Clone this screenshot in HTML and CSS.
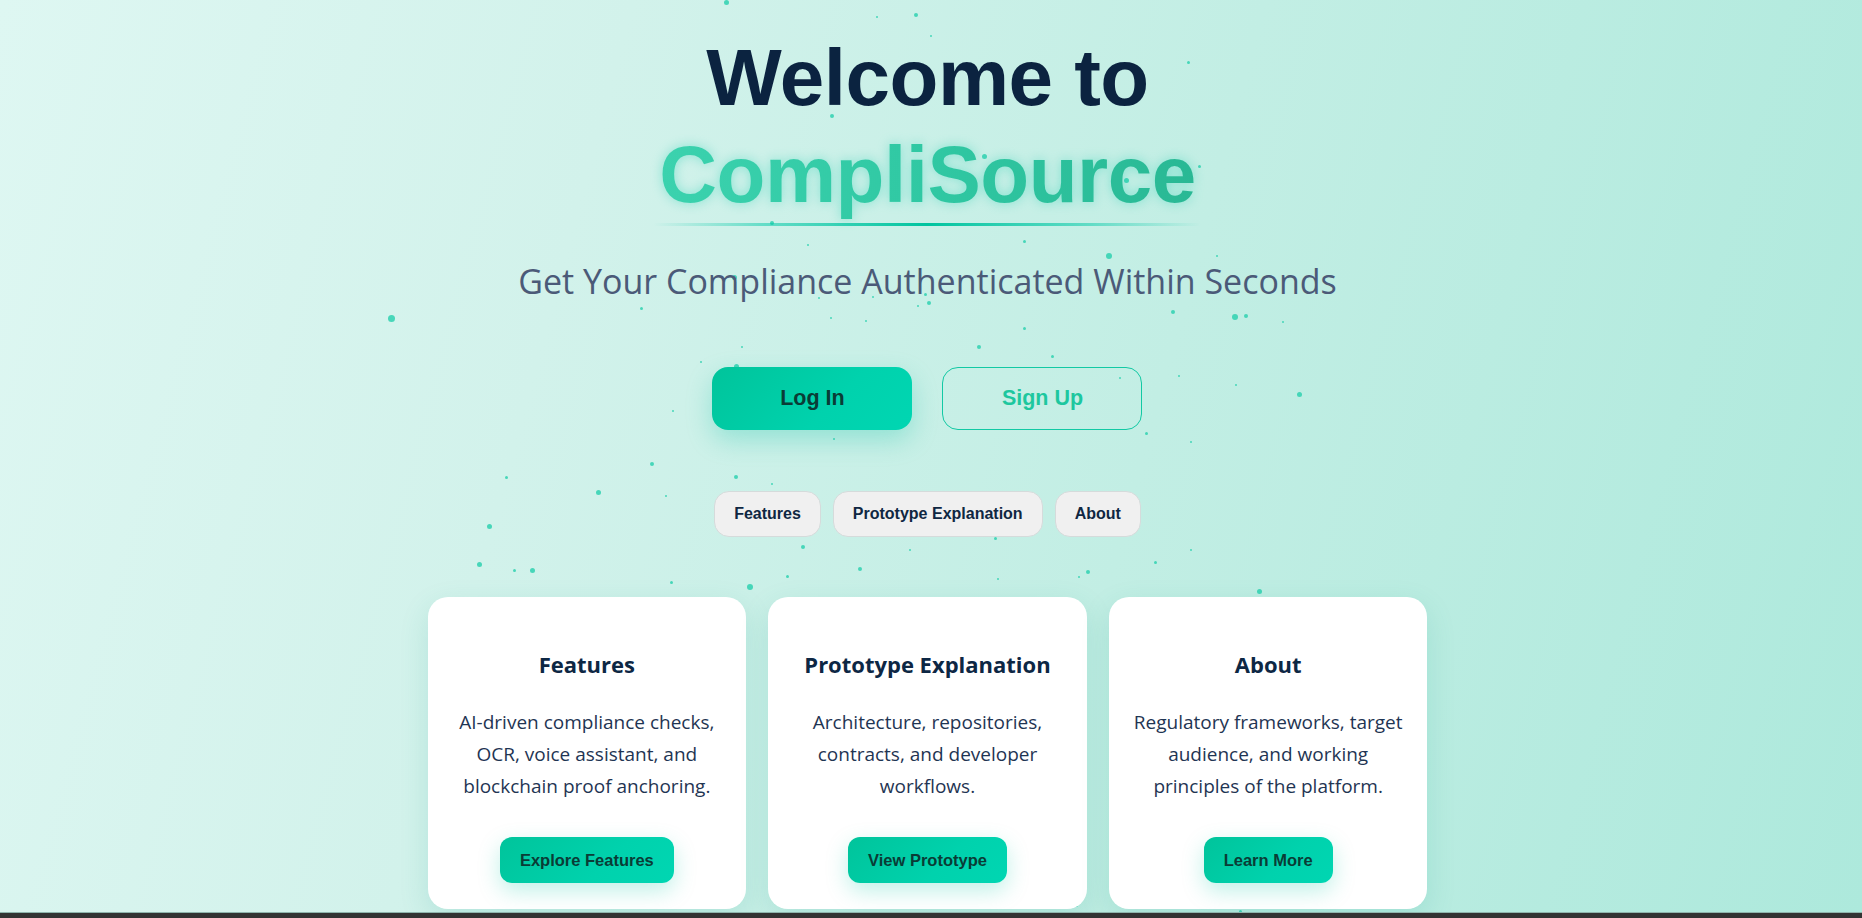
FILE: index.html
```html
<!DOCTYPE html>
<html lang="en">
<head>
<meta charset="utf-8">
<title>CompliSource</title>
<link rel="stylesheet" href="styles.css">
</head>
<body>
<div class="particles">
  <span class="dot" style="left:724px;top:0px;width:5px;height:5px"></span>
  <span class="dot" style="left:876px;top:16px;width:2px;height:2px"></span>
  <span class="dot" style="left:914px;top:13px;width:4px;height:4px"></span>
  <span class="dot" style="left:930px;top:35px;width:2px;height:2px"></span>
  <span class="dot" style="left:1187px;top:61px;width:3px;height:3px"></span>
  <span class="dot" style="left:830px;top:114px;width:4px;height:4px"></span>
  <span class="dot" style="left:982px;top:154px;width:5px;height:5px"></span>
  <span class="dot" style="left:1198px;top:165px;width:3px;height:3px"></span>
  <span class="dot" style="left:1124px;top:178px;width:5px;height:5px"></span>
  <span class="dot" style="left:770px;top:221px;width:4px;height:4px"></span>
  <span class="dot" style="left:807px;top:244px;width:2px;height:2px"></span>
  <span class="dot" style="left:1023px;top:240px;width:3px;height:3px"></span>
  <span class="dot" style="left:1106px;top:253px;width:6px;height:6px"></span>
  <span class="dot" style="left:1216px;top:255px;width:2px;height:2px"></span>
  <span class="dot" style="left:732px;top:275px;width:5px;height:5px"></span>
  <span class="dot" style="left:640px;top:307px;width:3px;height:3px"></span>
  <span class="dot" style="left:924px;top:293px;width:3px;height:3px"></span>
  <span class="dot" style="left:927px;top:301px;width:4px;height:4px"></span>
  <span class="dot" style="left:818px;top:297px;width:2px;height:2px"></span>
  <span class="dot" style="left:872px;top:296px;width:2px;height:2px"></span>
  <span class="dot" style="left:917px;top:305px;width:2px;height:2px"></span>
  <span class="dot" style="left:388px;top:315px;width:7px;height:7px"></span>
  <span class="dot" style="left:1023px;top:327px;width:3px;height:3px"></span>
  <span class="dot" style="left:1171px;top:310px;width:4px;height:4px"></span>
  <span class="dot" style="left:1232px;top:314px;width:6px;height:6px"></span>
  <span class="dot" style="left:1244px;top:314px;width:4px;height:4px"></span>
  <span class="dot" style="left:1282px;top:321px;width:2px;height:2px"></span>
  <span class="dot" style="left:830px;top:317px;width:2px;height:2px"></span>
  <span class="dot" style="left:865px;top:320px;width:2px;height:2px"></span>
  <span class="dot" style="left:977px;top:345px;width:4px;height:4px"></span>
  <span class="dot" style="left:1051px;top:355px;width:3px;height:3px"></span>
  <span class="dot" style="left:741px;top:346px;width:2px;height:2px"></span>
  <span class="dot" style="left:700px;top:361px;width:2px;height:2px"></span>
  <span class="dot" style="left:734px;top:364px;width:5px;height:5px"></span>
  <span class="dot" style="left:1119px;top:377px;width:2px;height:2px"></span>
  <span class="dot" style="left:1178px;top:375px;width:2px;height:2px"></span>
  <span class="dot" style="left:1235px;top:384px;width:2px;height:2px"></span>
  <span class="dot" style="left:1297px;top:392px;width:5px;height:5px"></span>
  <span class="dot" style="left:672px;top:410px;width:2px;height:2px"></span>
  <span class="dot" style="left:738px;top:425px;width:2px;height:2px"></span>
  <span class="dot" style="left:833px;top:438px;width:2px;height:2px"></span>
  <span class="dot" style="left:1145px;top:432px;width:3px;height:3px"></span>
  <span class="dot" style="left:1190px;top:441px;width:2px;height:2px"></span>
  <span class="dot" style="left:650px;top:462px;width:4px;height:4px"></span>
  <span class="dot" style="left:505px;top:476px;width:3px;height:3px"></span>
  <span class="dot" style="left:596px;top:490px;width:5px;height:5px"></span>
  <span class="dot" style="left:665px;top:495px;width:2px;height:2px"></span>
  <span class="dot" style="left:734px;top:475px;width:4px;height:4px"></span>
  <span class="dot" style="left:771px;top:483px;width:2px;height:2px"></span>
  <span class="dot" style="left:487px;top:524px;width:5px;height:5px"></span>
  <span class="dot" style="left:801px;top:545px;width:4px;height:4px"></span>
  <span class="dot" style="left:909px;top:549px;width:2px;height:2px"></span>
  <span class="dot" style="left:994px;top:537px;width:3px;height:3px"></span>
  <span class="dot" style="left:1154px;top:561px;width:3px;height:3px"></span>
  <span class="dot" style="left:1190px;top:549px;width:2px;height:2px"></span>
  <span class="dot" style="left:477px;top:562px;width:5px;height:5px"></span>
  <span class="dot" style="left:513px;top:569px;width:3px;height:3px"></span>
  <span class="dot" style="left:530px;top:568px;width:5px;height:5px"></span>
  <span class="dot" style="left:670px;top:581px;width:3px;height:3px"></span>
  <span class="dot" style="left:747px;top:584px;width:6px;height:6px"></span>
  <span class="dot" style="left:786px;top:575px;width:3px;height:3px"></span>
  <span class="dot" style="left:858px;top:567px;width:4px;height:4px"></span>
  <span class="dot" style="left:997px;top:578px;width:2px;height:2px"></span>
  <span class="dot" style="left:1078px;top:576px;width:2px;height:2px"></span>
  <span class="dot" style="left:1086px;top:570px;width:4px;height:4px"></span>
  <span class="dot" style="left:1257px;top:589px;width:5px;height:5px"></span>
  <span class="dot" style="left:1075px;top:904px;width:3px;height:3px"></span>
  <span class="dot" style="left:1239px;top:910px;width:3px;height:3px"></span>
</div>

<main class="page">
  <header class="hero">
    <h1 class="title">
      <span class="title-line">Welcome to</span>
      <span class="title-brand">CompliSource</span>
    </h1>
    <div class="title-rule"></div>
    <p class="subtitle">Get Your Compliance Authenticated Within Seconds</p>

    <div class="auth">
      <button class="btn btn-primary">Log In</button>
      <button class="btn btn-outline">Sign Up</button>
    </div>

    <nav class="pills">
      <a class="pill" href="#features">Features</a>
      <a class="pill" href="#prototype">Prototype Explanation</a>
      <a class="pill" href="#about">About</a>
    </nav>
  </header>

  <section class="cards">
    <article class="card" id="features">
      <h3 class="card-title">Features</h3>
      <p class="card-text">AI-driven compliance checks, OCR, voice assistant, and blockchain proof anchoring.</p>
      <button class="card-btn">Explore Features</button>
    </article>
    <article class="card" id="prototype">
      <h3 class="card-title">Prototype Explanation</h3>
      <p class="card-text">Architecture, repositories, contracts, and developer workflows.</p>
      <button class="card-btn">View Prototype</button>
    </article>
    <article class="card" id="about">
      <h3 class="card-title">About</h3>
      <p class="card-text">Regulatory frameworks, target audience, and working principles of the platform.</p>
      <button class="card-btn">Learn More</button>
    </article>
  </section>
</main>

<div class="bottom-bar"></div>
</body>
</html>
```

FILE: styles.css
```css
* { box-sizing: border-box; }

html, body {
  margin: 0;
  height: 100%;
}

body {
  overflow: hidden;
  position: relative;
  font-family: "Open Sans", "Noto Sans", sans-serif;
  color: #0b2340;
  background:
    linear-gradient(105deg, #def7f2 0%, #d2f2eb 30%, #c2eee4 60%, #ade9dc 100%);
}

.particles {
  position: absolute;
  inset: 0;
  pointer-events: none;
  z-index: 0;
}

.dot {
  position: absolute;
  border-radius: 50%;
  background: #2fd1b0;
  opacity: 0.85;
}

.page {
  position: relative;
  z-index: 1;
  display: flex;
  flex-direction: column;
  align-items: center;
  padding: 30px 7px 0 0;
}

.hero {
  display: flex;
  flex-direction: column;
  align-items: center;
}

.title {
  margin: 0;
  display: flex;
  flex-direction: column;
  align-items: center;
  font-family: "Liberation Sans", Arial, sans-serif;
  font-weight: 700;
  font-size: 80px;
  line-height: 1.21;
  letter-spacing: -0.5px;
  text-align: center;
}

.title-line {
  color: #0b2340;
}

.title-brand {
  background: linear-gradient(90deg, #3bd2ae 0%, #30c8a3 50%, #29b894 100%);
  -webkit-background-clip: text;
  background-clip: text;
  color: transparent;
  filter: drop-shadow(0 0 6px rgba(0, 201, 167, 0.35));
}

.title-rule {
  width: 548px;
  height: 3px;
  margin-top: -1px;
  border-radius: 2px;
  background: linear-gradient(90deg, rgba(0, 201, 167, 0) 0%, rgba(0, 201, 167, 0.5) 20%, #00c49f 50%, rgba(0, 201, 167, 0.5) 80%, rgba(0, 201, 167, 0) 100%);
}

.subtitle {
  margin: 33px 0 0;
  font-size: 34px;
  line-height: 44px;
  font-weight: 400;
  color: #4b5a78;
  letter-spacing: 0;
}

.auth {
  display: flex;
  gap: 30px;
  margin-top: 64px;
}

.btn {
  width: 200px;
  height: 63px;
  border-radius: 16px;
  font-family: "Liberation Sans", Arial, sans-serif;
  font-weight: 700;
  font-size: 21.5px;
  cursor: pointer;
}

.btn-primary {
  border: none;
  color: #0a3c36;
  background: linear-gradient(135deg, #00c49b 0%, #00d2ad 60%, #00d6b2 100%);
  box-shadow: 0 10px 26px rgba(0, 190, 160, 0.28);
}

.btn-outline {
  border: 1px solid #12c9a4;
  color: #1dc79f;
  background: transparent;
}

.pills {
  display: flex;
  gap: 12px;
  margin-top: 61px;
}

.pill {
  display: block;
  padding: 12.5px 19px;
  border: 1px solid #d5dbdb;
  border-radius: 15px;
  background: #f0f0f0;
  font-family: "Liberation Sans", Arial, sans-serif;
  font-weight: 700;
  font-size: 16px;
  line-height: 19px;
  color: #0f2742;
  text-decoration: none;
}

.cards {
  display: grid;
  grid-template-columns: repeat(3, 1fr);
  gap: 22px;
  width: 1000px;
  margin-top: 60px;
}

.card {
  display: flex;
  flex-direction: column;
  align-items: center;
  padding: 52px 24px 26px;
  background: #ffffff;
  border-radius: 20px;
  box-shadow: 0 10px 30px rgba(0, 150, 125, 0.14);
  text-align: center;
}

.card-title {
  margin: 0;
  font-size: 22px;
  line-height: 30px;
  font-weight: 700;
  color: #0d2744;
}

.card-text {
  margin: 27px 0 0;
  font-size: 19px;
  line-height: 32px;
  color: #1f3553;
}

.card-btn {
  margin-top: 35px;
  padding: 14px 20px;
  border: none;
  border-radius: 12px;
  background: linear-gradient(135deg, #00c49b 0%, #00d2ad 60%, #00d6b2 100%);
  box-shadow: 0 8px 22px rgba(0, 200, 165, 0.25);
  font-family: "Liberation Sans", Arial, sans-serif;
  font-weight: 700;
  font-size: 16.5px;
  line-height: 18px;
  color: #0a3c36;
  cursor: pointer;
}

.bottom-bar {
  position: absolute;
  left: 0;
  right: 0;
  bottom: 0;
  height: 6px;
  background: #333333;
  border-top: 1px solid #8fb5ad;
  z-index: 2;
}
```
